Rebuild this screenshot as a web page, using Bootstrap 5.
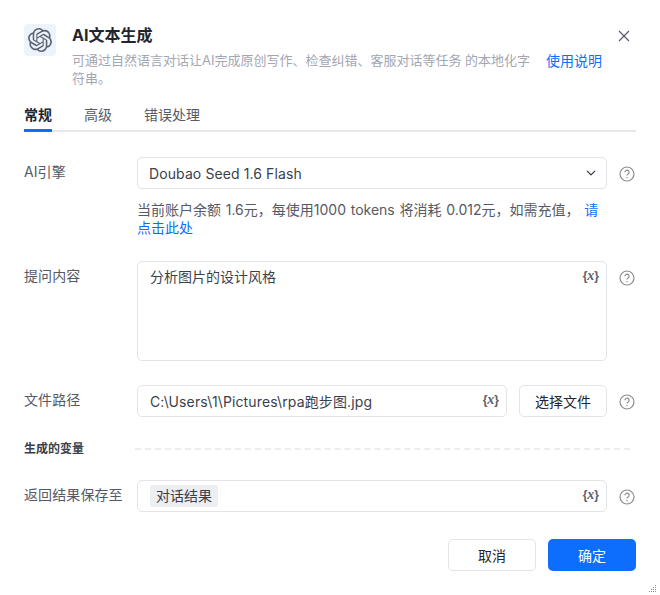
<!DOCTYPE html>
<html lang="zh">
<head>
  <meta charset="UTF-8" />
  <meta name="viewport" content="width=device-width, initial-scale=1">
  <title>AI文本生成</title>
  <link href="https://cdn.jsdelivr.net/npm/bootstrap@5.3.0/dist/css/bootstrap.min.css" rel="stylesheet">
  <style>
    body {
      font-family: "Inter", "Noto Sans CJK SC", sans-serif;
      font-size: 14px;
      color: #3b3f4a;
      background: #fff;
    }
    .dialog-box { width: 660px; height: 595px; padding: 24px 24px 0; position: relative; overflow: hidden; }
    .logo-box { width: 32px; height: 32px; background: #edf3fc; border-radius: 4px; flex: none; }
    .dlg-title { font-size: 16px; line-height: 22px; font-weight: 700; color: #23262e; margin: 0; }
    .dlg-desc { font-size: 13px; line-height: 18px; color: #a3a6b1; width: 462px; margin-top: 5px; }
    .doc-link { font-size: 14px; line-height: 18px; color: #0d6efd; text-decoration: none; margin: 6px 0 0 12px; }
    .close-x { position: absolute; top: 30px; right: 30px; line-height: 0; }
    .tab-bar { border-bottom: 2px solid #e6e7ea; margin-top: 18px; height: 27px; gap: 32px; }
    .tab-item { line-height: 20px; height: 27px; color: #565a66; }
    .tab-item.on { color: #23262e; font-weight: 700; border-bottom: 3px solid #0d6efd; }
    .field-row { display: flex; margin-top: 24px; }
    .first-row { margin-top: 25px; }
    .field-label { width: 113px; flex: none; line-height: 30px; height: 32px; color: #565a66; letter-spacing: .1px; }
    .field-body { width: 470px; flex: none; position: relative; }
    .help-mark { margin: 9px 0 0 12px; line-height: 0; flex: none; }
    .form-select, .form-control, .plain-btn {
      font-size: 14px; color: #3b3f4a; border: 1px solid #e3e4ea; border-radius: 5px; font-family: inherit;
    }
    .form-select { height: 32px; padding: 0 30px 0 11px; background-position: right 8px center; background-size: 14px 10px; letter-spacing: .1px; }
    .form-control { height: 32px; padding: 0 30px 0 12px; letter-spacing: .13px; }
    textarea.form-control { height: 100px; padding: 5px 30px 0 12px; resize: none; line-height: 20px; letter-spacing: 0; }
    .var-mark { position: absolute; right: 8px; top: 8px; font-size: 12px; line-height: 14px; font-weight: 600; color: #5c606c; font-family: "Liberation Sans", sans-serif; }
    .var-mark i { font-family: "Liberation Serif", serif; font-size: 14px; }
    .hint-text { line-height: 18px; margin-top: 12px; color: #565a66; word-spacing: .8px; }
    .hint-text a { color: #0d6efd; text-decoration: none; }
    .plain-btn { background: #fff; height: 32px; padding: 0; color: #23262e; }
    .pick-btn { width: 88px; margin-left: 12px; flex: none; letter-spacing: 0; }
    .var-section { margin-top: 23px; }
    .var-head { font-size: 12px; font-weight: 700; color: #3b3f4a; line-height: 18px; width: 111px; flex: none; }
    .dash-line { border-top: 2px dashed #eceded; width: 495px; }
    .var-row { margin-top: 22px; }
    .tag-box { height: 32px; border: 1px solid #e3e4ea; border-radius: 5px; padding: 4px 12px; }
    .var-tag { display: inline-block; background: #eceef1; border-radius: 3px; line-height: 22px; height: 22px; padding: 0 6px; }
    .foot-row { margin-top: 27px; gap: 12px; }
    .foot-btn { width: 88px; height: 32px; padding: 0; font-size: 14px; border-radius: 5px; }
    .ok-btn { background: #0d6efd; border: 0; color: #fff; }
    .grip { position: absolute; right: 3px; bottom: 2px; line-height: 0; }
  </style>
</head>
<body>
  <div class="dialog-box">
    <div class="d-flex">
      <div class="logo-box d-flex align-items-center justify-content-center">
        <svg width="24" height="24" viewBox="0 0 24 24" fill="#5c6472"><path d="M22.2819 9.8211a5.9847 5.9847 0 0 0-.5157-4.9108 6.0462 6.0462 0 0 0-6.5098-2.9A6.0651 6.0651 0 0 0 4.9807 4.1818a5.9847 5.9847 0 0 0-3.9977 2.9 6.0462 6.0462 0 0 0 .7427 7.0966 5.98 5.98 0 0 0 .511 4.9107 6.051 6.051 0 0 0 6.5146 2.9001A5.9847 5.9847 0 0 0 13.2599 24a6.0557 6.0557 0 0 0 5.7718-4.2058 5.9894 5.9894 0 0 0 3.9977-2.9001 6.0557 6.0557 0 0 0-.7475-7.0729zm-9.022 12.6081a4.4755 4.4755 0 0 1-2.8764-1.0408l.1419-.0804 4.7783-2.7582a.7948.7948 0 0 0 .3927-.6813v-6.7369l2.02 1.1686a.071.071 0 0 1 .038.052v5.5826a4.504 4.504 0 0 1-4.4945 4.4944zm-9.6607-4.1254a4.4708 4.4708 0 0 1-.5346-3.0137l.142.0852 4.783 2.7582a.7712.7712 0 0 0 .7806 0l5.8428-3.3685v2.3324a.0804.0804 0 0 1-.0332.0615L9.74 19.9502a4.4992 4.4992 0 0 1-6.1408-1.6464zM2.3408 7.8956a4.485 4.485 0 0 1 2.3655-1.9728V11.6a.7664.7664 0 0 0 .3879.6765l5.8144 3.3543-2.0201 1.1685a.0757.0757 0 0 1-.071 0l-4.8303-2.7865A4.504 4.504 0 0 1 2.3408 7.872zm16.5963 3.8558L13.1038 8.364 15.1192 7.2a.0757.0757 0 0 1 .071 0l4.8303 2.7913a4.4944 4.4944 0 0 1-.6765 8.1042v-5.6772a.79.79 0 0 0-.407-.667zm2.0107-3.0231l-.142-.0852-4.7735-2.7818a.7759.7759 0 0 0-.7854 0L9.409 9.2297V6.8974a.0662.0662 0 0 1 .0284-.0615l4.8303-2.7866a4.4992 4.4992 0 0 1 6.6802 4.66zM8.3065 12.863l-2.02-1.1638a.0804.0804 0 0 1-.038-.0567V6.0742a4.4992 4.4992 0 0 1 7.3757-3.4537l-.142.0805L8.704 5.459a.7948.7948 0 0 0-.3927.6813zm1.0976-2.3654l2.602-1.4998 2.6069 1.4998v2.9994l-2.5974 1.4997-2.6067-1.4997Z"/></svg>
      </div>
      <div class="ms-3">
        <h1 class="dlg-title">AI文本生成</h1>
        <div class="d-flex">
          <div class="dlg-desc">可通过自然语言对话让AI完成原创写作、检查纠错、客服对话等任务 的本地化字符串。</div>
          <a class="doc-link" href="#">使用说明</a>
        </div>
      </div>
    </div>
    <div class="close-x">
      <svg width="12" height="12" viewBox="0 0 12 12" stroke="#565a66" stroke-width="1.2"><path d="M1 1l10 10M11 1L1 11"/></svg>
    </div>

    <div class="tab-bar d-flex">
      <div class="tab-item on">常规</div>
      <div class="tab-item">高级</div>
      <div class="tab-item">错误处理</div>
    </div>

    <div class="field-row first-row">
      <div class="field-label">AI引擎</div>
      <div class="field-body">
        <select class="form-select"><option>Doubao Seed 1.6 Flash</option></select>
        <div class="hint-text">当前账户余额 1.6元，每使用1000 tokens 将消耗 0.012元，如需充值， <a href="#">请点击此处</a></div>
      </div>
      <div class="help-mark">
        <svg width="16" height="16" viewBox="0 0 16 16" fill="none" stroke="#8b8d92" stroke-width="1.2"><circle cx="8" cy="8" r="7"/><path d="M5.9 6.2a2.1 2.1 0 1 1 3.2 1.8c-.7.4-1.1.8-1.1 1.6"/><path d="M8 11v1.2"/></svg>
      </div>
    </div>

    <div class="field-row">
      <div class="field-label">提问内容</div>
      <div class="field-body">
        <textarea class="form-control">分析图片的设计风格</textarea>
        <span class="var-mark">{<i>x</i>}</span>
      </div>
      <div class="help-mark">
        <svg width="16" height="16" viewBox="0 0 16 16" fill="none" stroke="#8b8d92" stroke-width="1.2"><circle cx="8" cy="8" r="7"/><path d="M5.9 6.2a2.1 2.1 0 1 1 3.2 1.8c-.7.4-1.1.8-1.1 1.6"/><path d="M8 11v1.2"/></svg>
      </div>
    </div>

    <div class="field-row">
      <div class="field-label">文件路径</div>
      <div class="field-body d-flex">
        <div class="position-relative flex-grow-1">
          <input class="form-control" value="C:\Users\1\Pictures\rpa跑步图.jpg">
          <span class="var-mark">{<i>x</i>}</span>
        </div>
        <button class="plain-btn pick-btn">选择文件</button>
      </div>
      <div class="help-mark">
        <svg width="16" height="16" viewBox="0 0 16 16" fill="none" stroke="#8b8d92" stroke-width="1.2"><circle cx="8" cy="8" r="7"/><path d="M5.9 6.2a2.1 2.1 0 1 1 3.2 1.8c-.7.4-1.1.8-1.1 1.6"/><path d="M8 11v1.2"/></svg>
      </div>
    </div>

    <div class="d-flex align-items-center var-section">
      <div class="var-head">生成的变量</div>
      <div class="dash-line"></div>
    </div>

    <div class="field-row var-row">
      <div class="field-label">返回结果保存至</div>
      <div class="field-body">
        <div class="tag-box"><span class="var-tag">对话结果</span></div>
        <span class="var-mark">{<i>x</i>}</span>
      </div>
      <div class="help-mark">
        <svg width="16" height="16" viewBox="0 0 16 16" fill="none" stroke="#8b8d92" stroke-width="1.2"><circle cx="8" cy="8" r="7"/><path d="M5.9 6.2a2.1 2.1 0 1 1 3.2 1.8c-.7.4-1.1.8-1.1 1.6"/><path d="M8 11v1.2"/></svg>
      </div>
    </div>

    <div class="d-flex justify-content-end foot-row">
      <button class="plain-btn foot-btn">取消</button>
      <button class="foot-btn ok-btn">确定</button>
    </div>

    <div class="grip">
      <svg width="9" height="9" viewBox="0 0 9 9" fill="#8b8d92"><rect x="7" y="1" width="1" height="1"/><rect x="5" y="3" width="1" height="1"/><rect x="7" y="3" width="1" height="1"/><rect x="3" y="5" width="1" height="1"/><rect x="5" y="5" width="1" height="1"/><rect x="7" y="5" width="1" height="1"/><rect x="1" y="7" width="1" height="1"/><rect x="3" y="7" width="1" height="1"/><rect x="5" y="7" width="1" height="1"/><rect x="7" y="7" width="1" height="1"/></svg>
    </div>
  </div>
  <script src="https://cdn.jsdelivr.net/npm/bootstrap@5.3.0/dist/js/bootstrap.bundle.min.js"></script>
</body>
</html>
